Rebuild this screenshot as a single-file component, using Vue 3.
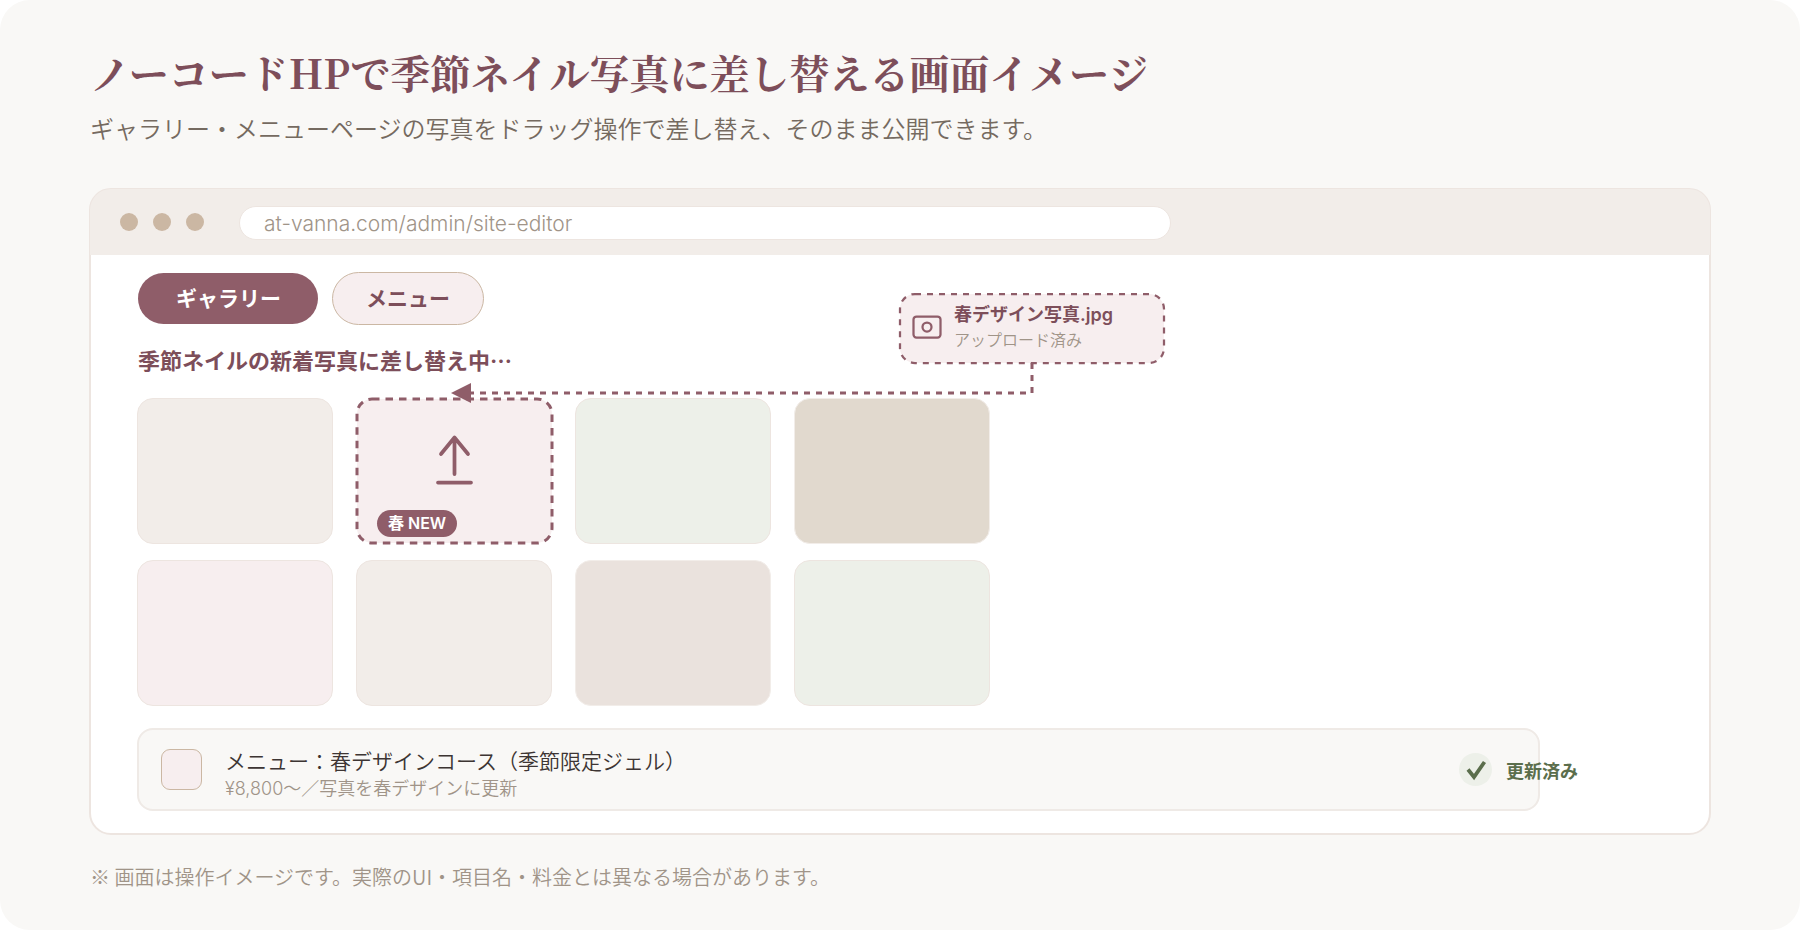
<template>
  <main class="page">
    <h1>ノーコードHPで季節ネイル写真に差し替える画面イメージ</h1>
    <p class="lead">ギャラリー・メニューページの写真をドラッグ操作で差し替え、そのまま公開できます。</p>

    <section class="browser">
      <div class="browser-bar">
        <span v-for="n in 3" :key="n" class="dot"></span>
        <input v-model="url" class="url" type="text" aria-label="URL" />
      </div>

      <div class="editor">
        <div class="tabs">
          <button
            v-for="tab in tabs"
            :key="tab.id"
            type="button"
            class="tab"
            :class="{ wide: tab.wide, active: tab.id === activeTab }"
            @click="activeTab = tab.id"
          >
            {{ tab.label }}
          </button>
        </div>

        <h2>季節ネイルの新着写真に差し替え中…</h2>

        <div class="gallery">
          <div v-for="(tile, index) in tiles" :key="index" class="tile" :class="tile">
            <template v-if="tile === 'target'">
              <svg class="tile-frame" viewBox="0 0 198 147" aria-hidden="true">
                <rect x="1" y="1" width="195" height="144" rx="15" />
              </svg>
              <svg class="upload-icon" viewBox="0 0 38 52" aria-hidden="true">
                <path d="M18.500 41V4.500M5 21 18.500 4.500 32 21M2 49.500H35" />
              </svg>
              <span class="badge">春 NEW</span>
            </template>
          </div>
        </div>

        <div class="menu-row">
          <span class="swatch"></span>
          <div class="menu-text">
            <p class="menu-name">メニュー：春デザインコース（季節限定ジェル）</p>
            <p class="menu-note">¥8,800〜／写真を春デザインに更新</p>
          </div>
          <div class="status">
            <svg class="check" viewBox="0 0 33 33" aria-hidden="true">
              <circle cx="16.500" cy="16.500" r="16.500" />
              <path d="M9 16.500 15 24 25.500 9" />
            </svg>
            更新済み
          </div>
        </div>

        <svg class="connector" viewBox="0 0 584 41" aria-hidden="true">
          <path class="line" d="M582 0V30H18" />
          <path class="head" d="M1 30 21 20V40Z" />
        </svg>

        <div class="file">
          <svg class="file-frame" viewBox="0 0 268 73" aria-hidden="true">
            <rect x="2" y="2" width="264" height="69" rx="15" />
          </svg>
          <svg class="file-icon" viewBox="0 0 30 24" aria-hidden="true">
            <rect x="1.500" y="1.500" width="27" height="21" rx="3" />
            <circle cx="15" cy="12" r="4.500" />
          </svg>
          <div class="file-text">
            <p class="file-name">春デザイン写真.jpg</p>
            <p class="file-state">アップロード済み</p>
          </div>
        </div>
      </div>
    </section>

    <p class="footnote">※ 画面は操作イメージです。実際のUI・項目名・料金とは異なる場合があります。</p>
  </main>
</template>

<script setup>
import { ref } from "vue";

const url = ref("at-vanna.com/admin/site-editor");
const activeTab = ref("gallery");

const tabs = [
  { id: "gallery", label: "ギャラリー", wide: true },
  { id: "menu", label: "メニュー" },
];

const tiles = ["sand", "target", "sage", "beige", "pink", "sand", "mocha", "sage"];
</script>

<style>
body {
  margin: 0;
  background: #ffffff;
}
</style>

<style scoped>
.page {
  box-sizing: border-box;
  min-height: 100vh;
  padding: 45px 89px 32px;
  border-radius: 30px;
  background: #f9f8f6;
  color: #3d3533;
  font-family: "Noto Sans CJK JP", sans-serif;
  font-weight: 350;
}

h1,
h2,
p {
  margin: 0;
}

h1 {
  padding-left: 1px;
  color: #7d4e5a;
  font-family: "Noto Serif CJK JP", "Noto Sans CJK JP", serif;
  font-size: 40px;
  font-weight: 700;
  line-height: 54px;
}

.lead {
  margin-top: 11px;
  padding-left: 1px;
  color: #756a60;
  font-size: 24px;
  line-height: 36px;
}

.browser {
  margin-top: 42px;
  border: 2px solid #ede5e0;
  border-radius: 22px;
  background: #ffffff;
}

.browser-bar {
  display: flex;
  align-items: center;
  gap: 15px;
  height: 66px;
  margin: -1px -1px 0;
  padding-left: 30px;
  border-radius: 21px 21px 0 0;
  background: #f2ede9;
}

.dot {
  width: 18px;
  height: 18px;
  border-radius: 50%;
  background: #cbb7a3;
}

.url {
  box-sizing: border-box;
  flex: 0 1 932px;
  min-width: 0;
  height: 34px;
  margin: 2px 0 0 20px;
  padding: 1px 24px 0;
  border: 1px solid #ede5e0;
  border-radius: 17px;
  background: #ffffff;
  color: #a09488;
  font-family: Inter, "Noto Sans CJK JP", sans-serif;
  font-size: 21px;
  font-weight: 300;
}

.editor {
  position: relative;
  padding: 17px 46px 22px;
}

.tabs {
  display: flex;
  gap: 13px;
}

.tab {
  height: 53px;
  padding: 0 33px 3px;
  border: 1px solid #cbb7a3;
  border-radius: 27px;
  background: #f7eeef;
  color: #7d4e5a;
  font-family: inherit;
  font-size: 21px;
  font-weight: 600;
  cursor: pointer;
}

.tab.wide {
  padding: 0 37px 3px 38px;
}

.tab.active {
  border-color: transparent;
  background: #8f5d69;
  background-clip: padding-box;
  color: #ffffff;
}

h2 {
  margin-top: 19px;
  padding-left: 1px;
  color: #7d4e5a;
  font-size: 22px;
  font-weight: 600;
  line-height: 30px;
}

.gallery {
  display: grid;
  grid-template-columns: repeat(4, 196px);
  grid-auto-rows: 146px;
  gap: 16px 23px;
  margin-top: 24px;
}

.tile {
  box-sizing: border-box;
  border: 1px solid #ede5e0;
  border-radius: 16px;
}

.sand {
  background: #f2ede9;
}

.sage {
  background: #edf0e9;
}

.beige {
  border-color: #f2ede9;
  background: #e1d9ce;
}

.pink {
  background: #f7eeef;
}

.mocha {
  border-color: #f2ede9;
  background: #eae2dd;
}

.target {
  position: relative;
  border: 0;
}

.tile-frame {
  position: absolute;
  top: 0;
  left: 0;
  width: 198px;
  height: 147px;
  overflow: visible;
  fill: #f7eeef;
  stroke: #8f5d69;
  stroke-width: 3;
  stroke-dasharray: 7.5 6;
}

.upload-icon {
  position: absolute;
  top: 35px;
  left: 80px;
  width: 38px;
  height: 52px;
  fill: none;
  stroke: #8f5d69;
  stroke-width: 3.75;
  stroke-linecap: round;
  stroke-linejoin: round;
}

.badge {
  position: absolute;
  bottom: 7px;
  left: 21px;
  padding: 0 11px;
  border-radius: 14px;
  background: #8f5d69;
  color: #ffffff;
  font-family: Inter, "Noto Sans CJK JP", sans-serif;
  font-size: 16px;
  font-weight: 600;
  line-height: 27px;
}

.menu-row {
  box-sizing: border-box;
  display: flex;
  align-items: center;
  min-height: 83px;
  margin: 22px 123px 0 0;
  padding-left: 22px;
  border: 2px solid #efeae6;
  border-radius: 16px;
  background: #f9f8f6;
}

.swatch {
  box-sizing: border-box;
  width: 41px;
  height: 41px;
  border: 1px solid #cbb7a3;
  border-radius: 9px;
  background: #f7eeef;
}

.menu-text {
  flex: 1;
  margin-left: 23px;
  padding-top: 11px;
}

.menu-name {
  font-size: 21px;
  line-height: 28px;
}

.menu-note {
  color: #a09488;
  font-family: Inter, "Noto Sans CJK JP", sans-serif;
  font-size: 18px;
  line-height: 30px;
}

/* the label runs past the right edge of the row */
.status {
  display: flex;
  align-items: center;
  gap: 14px;
  margin-right: -40px;
  color: #5b6e4c;
  font-size: 18px;
  font-weight: 600;
}

.check {
  width: 33px;
  height: 33px;
  fill: #edf0e9;
}

.check path {
  fill: none;
  stroke: #5b6e4c;
  stroke-width: 3.75;
}

.connector {
  position: absolute;
  top: 108px;
  left: 359px;
  width: 584px;
  height: 41px;
}

.line {
  fill: none;
  stroke: #8f5d69;
  stroke-width: 3;
  stroke-dasharray: 6 6;
}

.head {
  fill: #8f5d69;
}

.file {
  position: absolute;
  top: 37px;
  left: 807px;
  display: flex;
  align-items: center;
  gap: 12px;
  box-sizing: border-box;
  width: 268px;
  height: 73px;
  padding: 0 0 4px 14px;
}

.file-frame {
  position: absolute;
  top: 0;
  left: 0;
  width: 268px;
  height: 73px;
  fill: #f7eeef;
  stroke: #8f5d69;
  stroke-width: 2.25;
  stroke-dasharray: 6 6;
}

.file-icon {
  position: relative;
  width: 30px;
  height: 24px;
  fill: none;
  stroke: #8f5d69;
  stroke-width: 2.25;
}

.file-text {
  position: relative;
}

.file-name {
  color: #7d4e5a;
  font-family: Inter, "Noto Sans CJK JP", sans-serif;
  font-size: 18px;
  font-weight: 600;
  line-height: 24px;
}

.file-state {
  color: #a09488;
  font-size: 16px;
  line-height: 24px;
}

.footnote {
  margin-top: 28px;
  padding-left: 1px;
  color: #a09488;
  font-size: 20px;
  line-height: 28px;
}
</style>
